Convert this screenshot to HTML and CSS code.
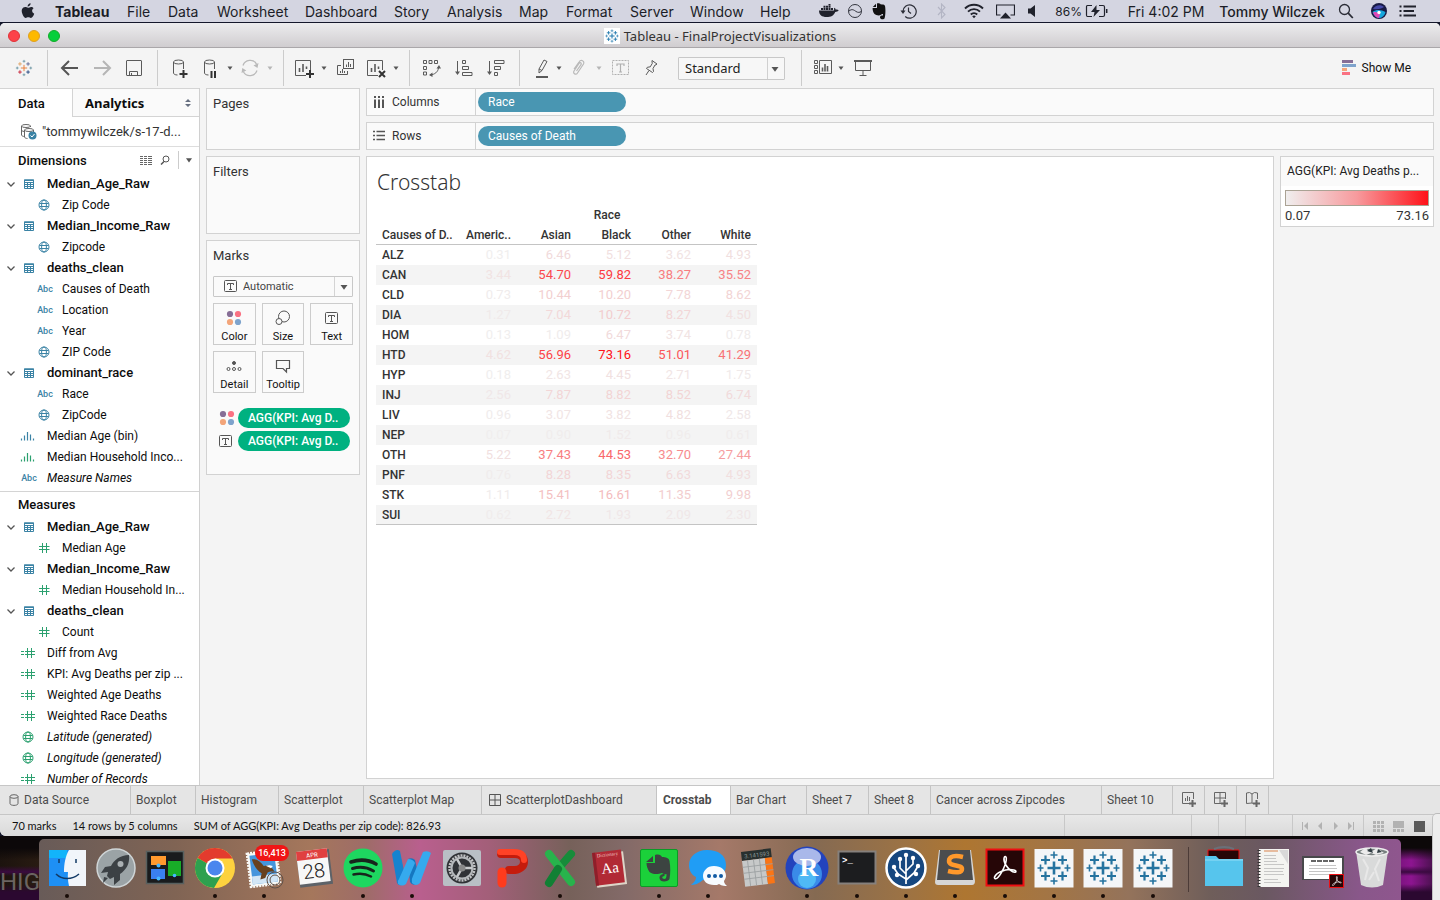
FILE: index.html
```html
<!DOCTYPE html>
<html lang="en">
<head>
<meta charset="utf-8">
<title>Tableau - FinalProjectVisualizations</title>
<link rel="stylesheet" href="styles.css">
</head>
<body>
<svg class="defs" aria-hidden="true">
  <symbol id="spark" viewBox="0 0 40 40"><path d="M20 13.500v13M13.500 20h13" stroke-width="2.600"/><path d="M11.500 7.500v9M7 12h9M28.500 7.500v9M24 12h9M11.500 23.500v9M7 28h9M28.500 23.500v9M24 28h9" stroke-width="2.200"/><path d="M20 3.500v7M16.500 7h7M20 29.500v7M16.500 33h7M6.500 16.500v7M3.500 20h6M33.500 16.500v7M30.500 20h6" stroke-width="1.600"/></symbol>
  <symbol id="caret" viewBox="0 0 10 10"><path d="M2.500 3.500h5L5 7z" fill="currentColor"/></symbol>
  <symbol id="chev" viewBox="0 0 10 10"><path d="M1.500 3.500 5 7l3.500-3.500" fill="none" stroke="#555" stroke-width="1.300"/></symbol>
  <symbol id="table" viewBox="0 0 12 12"><path d="M1.500 2h9v8.500h-9zM1.500 4.500h9M1.500 6.500h9M1.500 8.500h9M4.500 4v6.500M7.500 4v6.500" fill="none" stroke="currentColor"/><path d="M1 1.500h10v1.500H1z" fill="currentColor"/></symbol>
  <symbol id="globe" viewBox="0 0 12 12"><g fill="none" stroke="currentColor"><circle cx="6" cy="6" r="5"/><ellipse cx="6" cy="6" rx="2.400" ry="5"/><path d="M1.500 4.500h9M1.500 7.500h9"/></g></symbol>
  <symbol id="hash" viewBox="0 0 12 12"><path d="M4.500 1v10M8.500 1v10M1 4.500h10.500M1 7.500h10.500" fill="none" stroke="currentColor"/></symbol>
  <symbol id="chash" viewBox="0 0 16 12"><path d="M7.500 1v10M11.500 1v10M5 4.500h10M5 7.500h10M1 4.500h3M1 7.500h3" fill="none" stroke="currentColor"/></symbol>
  <symbol id="bins" viewBox="0 0 16 12"><path d="M1.500 8.500v2M4.500 5.500v5M7.500 2v8.500M10.500 4.500v6M13.500 8.500v2" fill="none" stroke="currentColor" stroke-width="1.200"/></symbol>
  <symbol id="tbox" viewBox="0 0 14 14"><rect x=".5" y="1.500" width="12" height="11" rx="1" fill="none" stroke="#555"/><path d="M3.500 6V4.500h6V6M6.500 4.500v5.500M5 10.500h3" fill="none" stroke="#555"/></symbol>
  <symbol id="dots4" viewBox="0 0 16 16"><circle cx="4" cy="4" r="3.100" fill="#876e96"/><circle cx="12" cy="4" r="3.100" fill="#fa7283"/><circle cx="4" cy="12" r="3.100" fill="#f3a57a"/><circle cx="12" cy="12" r="3.100" fill="#7ea3cc"/></symbol>
  <symbol id="acro" viewBox="0 0 20 20"><path d="M2.500 16.500c1-3 7-5.500 12-5 4 .5 3 2.500.5 1.500C11 11 8.500 6 9 3.500c.5-2 2-1 1.500 1.500C10 9 6 16.500 4 17.500c-1 .5-2 0-1.500-1z" fill="none" stroke="#fff" stroke-width="1.100"/></symbol>
</svg>

<header class="menubar">
  <nav class="menus" aria-label="Menu bar">
    <button class="menu apple" aria-label="Apple"><svg width="14" height="16" viewBox="0 0 14 16" fill="#20222c"><path d="M9.600.3c.1 1.700-1.400 3.300-3 3.200C6.500 1.900 8 .5 9.600.3zM12.600 5.300c-2.200 1.400-1.900 4.300.6 5.400-.6 1.800-1.900 4.200-3.300 4.200-1 0-1.400-.6-2.600-.6s-1.700.6-2.600.6C2.700 15-.2 8.900 1 6.200c.7-1.500 1.900-2.200 3.200-2.200 1.100 0 1.900.7 2.900.7.900 0 1.700-.8 3.100-.8.9 0 1.900.5 2.400 1.400z"/></svg></button>
    <button class="menu app">Tableau</button><button class="menu">File</button><button class="menu">Data</button><button class="menu">Worksheet</button><button class="menu">Dashboard</button><button class="menu">Story</button><button class="menu">Analysis</button><button class="menu">Map</button><button class="menu">Format</button><button class="menu">Server</button><button class="menu">Window</button><button class="menu">Help</button>
  </nav>
  <div class="tray">
    <svg width="20" height="14" viewBox="0 0 20 14" fill="#20222c"><path d="M0 6.500h15c.3-1.200-.2-2 .4-2.800 1 .5 1.300 1.200 1.300 2 1.200-.2 2.300 0 3 .5-.7 1.300-2 1.700-3.500 1.700C14.800 11.500 12 13 7.500 13 3 13 0 11 0 6.500z"/><path d="M2 4h2v2H2zM4.500 4h2v2h-2zM7 4h2v2H7zM9.500 4h2v2h-2zM12 4h2v2h-2zM4.500 1.700h2v2h-2zM7 1.700h2v2H7zM9.500 1.700h2v2h-2zM9.500-.4h2v1.800h-2z"/></svg>
    <svg width="16" height="16" viewBox="0 0 16 16" fill="none" stroke="#33353f"><circle cx="8" cy="8" r="6.500"/><path d="M2 8c3-2.500 5-1 7 .5 2 1.300 4 1 5 0"/></svg>
    <svg width="14" height="17" viewBox="0 0 14 17" fill="#111"><path d="M4 .8 4 4H.8zM5 .5c1.500-.4 3 .1 3.500.8 2 .2 4 .2 4.500 1.700.8 4 .5 10-.5 12.500-.8 1.200-4.500 1-4.500-1 0-1.800 1-2 3-2v-1.500c-1-.2-1.500 0-2 .8-1.500 1-5 .7-6.500-.8C1.200 9.500.5 7 .6 5H5z"/></svg>
    <svg width="17" height="17" viewBox="0 0 17 17" fill="none" stroke="#2a2c36" stroke-width="1.200"><path d="M3 8.500a6.600 6.600 0 1 1 2.200 5M8.500 4.500v4l2.500 2"/><path d="M.5 7.500h5L3 11z" fill="#2a2c36" stroke="none"/></svg>
    <svg width="10" height="16" viewBox="0 0 10 16" fill="none" stroke="#b3b5c4" stroke-width="1.100"><path d="m1 4 7 7.500-3.500 3.500V1L8 4.500 1 12"/></svg>
    <svg width="20" height="16" viewBox="0 0 20 16" fill="none" stroke="#20222c" stroke-width="1.900"><path d="M1 5.500c5-5 13-5 18 0M4 8.700c3.400-3.400 8.600-3.400 12 0M6.800 11.500c1.800-1.800 4.600-1.800 6.400 0"/><path d="m8.200 13.300 1.800 2 1.800-2c-1-1-2.600-1-3.600 0z" fill="#20222c" stroke="none"/></svg>
    <svg width="19" height="15" viewBox="0 0 19 15"><path d="M4.500 11h-4V1h18v10h-4" fill="none" stroke="#20222c" stroke-width="1.200"/><path d="M4 14.500h11l-5.500-6z" fill="#20222c"/></svg>
    <svg width="10" height="14" viewBox="0 0 10 14" fill="#20222c"><path d="M1 4.500h2.500L8 1v12L3.500 9.500H1z"/></svg>
    <span class="pct">86%</span>
    <svg width="24" height="14" viewBox="0 0 24 14" fill="none" stroke="#20222c" stroke-width="1.200"><path d="M7 1.500H2.500Q1.500 1.500 1.500 3v8q0 1.500 1 1.500H7M14 1.500h4q1.500 0 1.500 1.500v8q0 1.500-1.500 1.500h-4"/><path d="M11.500 1 6 8h3.500L8.500 13 15 6h-3.500z" fill="#20222c" stroke="none"/><path d="M21.700 5v4" stroke-width="1.500"/></svg>
    <span class="clock">Fri 4:02 PM</span><span class="user">Tommy Wilczek</span>
    <svg width="16" height="16" viewBox="0 0 16 16" fill="none" stroke="#2a2c36" stroke-width="1.300"><circle cx="6.500" cy="6.500" r="5"/><path d="m10.200 10.200 4.600 4.800" stroke-width="1.800"/></svg>
    <svg width="16" height="16" viewBox="0 0 16 16"><circle cx="8" cy="8" r="8" fill="#181a45"/><path d="M2 6c2-4 8-5 11-2-2 1-5 3-11 2z" fill="#4448a8"/><path d="M1.500 9c4-3 9-2 13 0-1 4-4 6-6.500 6S2.500 12 1.500 9z" fill="#16a7dc"/><path d="M2 9.500c3-1 5 0 7 2l-1 3.400C5 15 3 12.500 2 9.500z" fill="#e047b6"/><circle cx="8" cy="9.500" r="1.700" fill="#fff"/></svg>
    <svg width="18" height="14" viewBox="0 0 18 14" stroke="#20222c" stroke-width="1.800"><path d="M4.500 2.500H17M4.500 7H15M4.500 11.500H17M.5 2.500h2M.5 7h2M.5 11.500h2"/></svg>
  </div>
</header>

<div class="window">
  <div class="titlebar">
    <div class="lights"><button class="light red" aria-label="Close"></button><button class="light amber" aria-label="Minimize"></button><button class="light green" aria-label="Zoom"></button></div>
    <h1 class="title"><svg class="docicon" width="16" height="16" stroke="#1f78ad"><use href="#spark"/></svg>Tableau - FinalProjectVisualizations</h1>
  </div>

  <div class="toolbar">
    <div class="group g-logo"><button class="tool" aria-label="Start page"><svg width="18" height="18" viewBox="0 0 20 20" fill="none" stroke-width="1"><path d="M10 6.500v7M6.500 10h7" stroke="#e8762d"/><path d="M5.500 3.500v4M3.500 5.500h4" stroke="#e0a060"/><path d="M14.500 3.500v4M12.500 5.500h4" stroke="#5c6692"/><path d="M5.500 12.500v4M3.500 14.500h4" stroke="#c72037"/><path d="M14.500 12.500v4M12.500 14.500h4" stroke="#1f447e"/><path d="M10 1v3M8.500 2.500h3M10 16v3M8.500 17.500h3M2.500 8.500v3M1 10h3M17.500 8.500v3M16 10h3" stroke="#7099a6"/></svg></button></div>
    <div class="group g-nav">
      <button class="tool" aria-label="Undo"><svg width="24" height="24" fill="none" stroke="#555" stroke-width="2"><path d="M20 12H5M11 5l-7 7 7 7"/></svg></button>
      <button class="tool" aria-label="Redo"><svg width="24" height="24" fill="none" stroke="#b5b5b5" stroke-width="2"><path d="M4 12h15M13 5l7 7-7 7"/></svg></button>
      <button class="tool" aria-label="Save"><svg width="24" height="24" fill="none" stroke="#5a5a5a"><rect x="4.500" y="4.500" width="15" height="15" rx=".5"/><path d="M7.500 19v-3.500h8V19M9.500 19v-2"/></svg></button>
    </div>
    <div class="group g-data">
      <button class="tool n30" aria-label="New data source"><svg width="24" height="24" fill="none" stroke="#5a5a5a"><ellipse cx="10.500" cy="6" rx="5" ry="2"/><path d="M5.500 6v11c0 1 1.500 2 4 2M15.500 6v7"/><path d="M15.500 14v8M11.500 18h8" stroke="#333" stroke-width="2"/></svg></button>
      <button class="tool n30" aria-label="Pause auto updates"><svg width="24" height="24" fill="none" stroke="#5a5a5a"><ellipse cx="11.500" cy="6" rx="5" ry="2"/><path d="M6.500 6v11c0 1 1.500 2 4 2M16.500 6v7"/><path d="M13.500 15v7M17 15v7" stroke="#333" stroke-width="2"/></svg></button>
      <button class="tool drop" aria-label="Update options"><svg width="10" height="10"><use href="#caret"/></svg></button>
      <button class="tool n30" aria-label="Refresh"><svg width="24" height="24" fill="none" stroke="#b9b9b9" stroke-width="1.300"><path d="M5 9.500a7.500 7.500 0 0 1 13.500-1.500M19 14.500A7.500 7.500 0 0 1 5.500 16"/><path d="m20.500 7-1 5-4-2.500zM3.500 17l.8-5 4 2.500z" fill="#b9b9b9" stroke="none"/></svg></button>
      <button class="tool drop off" aria-label="Refresh options"><svg width="10" height="10"><use href="#caret"/></svg></button>
    </div>
    <div class="group g-sheet">
      <button class="tool n30" aria-label="New worksheet"><svg width="24" height="24" fill="none" stroke="#5a5a5a"><path d="M14 19.500H3.500v-15h15V14"/><path d="M7.500 16v-4M11 16V8M14.500 13v-2.500" stroke-width="1.600"/><path d="M18 14v8M14 18h8" stroke="#333" stroke-width="2"/></svg></button>
      <button class="tool drop" aria-label="New sheet options"><svg width="10" height="10"><use href="#caret"/></svg></button>
      <button class="tool" aria-label="Duplicate"><svg width="24" height="24" fill="none" stroke="#5a5a5a"><rect x="10.500" y="3.500" width="10" height="9"/><path d="M8 9.500H4.500v9h10V15M13.500 11V8.500M15.500 11V6M17.500 11V8M7.500 17v-2M9.500 17v-4M11.500 17v-2"/></svg></button>
      <button class="tool n30" aria-label="Clear sheet"><svg width="24" height="24" fill="none" stroke="#5a5a5a"><path d="M14 19.500H3.500v-15h15V14"/><path d="M7.500 16v-4M11 16V8M14.500 13v-2.500" stroke-width="1.600"/><path d="m15 15 6 6M21 15l-6 6" stroke="#333" stroke-width="2"/></svg></button>
      <button class="tool drop" aria-label="Clear options"><svg width="10" height="10"><use href="#caret"/></svg></button>
    </div>
    <div class="group g-sort">
      <button class="tool" aria-label="Swap rows and columns"><svg width="24" height="24" fill="none" stroke="#5a5a5a"><path d="M3.500 4.500h3v3h-3zM9 4.500h3v3H9zM14.500 4.500h3v3h-3zM3.500 10.500h3v3h-3zM3.500 16h3v3h-3zM18.500 12c-.5 4-4 6.500-8 7"/><path d="m19 9 2 3.500h-4.500zM9 19l3.500-2.500V21z" fill="#5a5a5a" stroke="none"/></svg></button>
      <button class="tool" aria-label="Sort ascending"><svg width="24" height="24" fill="none" stroke="#5a5a5a"><path d="M5.500 5v12M10.500 4.500h3v3h-3zM10.500 10.500h6v3h-6zM10.500 16.500h9.500v3h-9.500z"/><path d="M3 15.500h5L5.500 19z" fill="#5a5a5a" stroke="none"/></svg></button>
      <button class="tool" aria-label="Sort descending"><svg width="24" height="24" fill="none" stroke="#5a5a5a"><path d="M5.500 5v12M10.500 4.500h9.500v3h-9.500zM10.500 10.500h6v3h-6zM10.500 16.500h3v3h-3z"/><path d="M3 15.500h5L5.500 19z" fill="#5a5a5a" stroke="none"/></svg></button>
    </div>
    <div class="group g-format">
      <button class="tool n24" aria-label="Highlight"><svg width="24" height="24" fill="none" stroke="#5a5a5a"><path d="m9 13 5-9 3 1.500-5 9-3 2.500zM9 13l3 1.500"/><path d="M6 21h12" stroke-width="2"/></svg></button>
      <button class="tool drop" aria-label="Highlight options"><svg width="10" height="10"><use href="#caret"/></svg></button>
      <button class="tool n30" aria-label="Group members"><svg width="24" height="24" fill="none" stroke="#b9b9b9" stroke-width="1.200"><path d="m7 13 5-7c2-3 6-1 4.500 2l-6 9c-1.500 2.500-5 .5-3.500-2l5-7.500c1-1.500 3-.5 2 1.200L9.500 15"/></svg></button>
      <button class="tool drop off" aria-label="Group options"><svg width="10" height="10"><use href="#caret"/></svg></button>
      <button class="tool" aria-label="Show mark labels"><svg width="24" height="24" fill="none" stroke="#b0b0b0"><rect x="4.500" y="4.500" width="16" height="14" stroke-dasharray="2 1"/><path d="M9 10V8h7v2M12.500 8v8M11 16h3" stroke-width="1.200"/></svg></button>
      <button class="tool n30" aria-label="Fix axes"><svg width="24" height="24" fill="none" stroke="#5a5a5a"><path d="m13 4.500 5 3.500-1 .8-1 .2-2 3.500.5 3-1 1-6-4 .8-1.200 3-.5 2-3.500-.3-1.500zM10 14.500 7 19"/></svg></button>
      <label class="fit"><select aria-label="Fit"><option>Standard</option></select><svg width="14" height="14"><use href="#caret"/></svg></label>
    </div>
    <div class="group g-show">
      <button class="tool n24" aria-label="Show cards"><svg width="24" height="24" fill="none" stroke="#5a5a5a"><path d="M2.500 4.500h3v3h-3zM2.500 9.500h3v3h-3zM2.500 14.500h3v3h-3zM7.500 4.500h12v13h-12z"/><path d="M10.500 15.500v-4M13 15.500V8M15.500 15.500V10" stroke-width="1.600"/></svg></button>
      <button class="tool drop" aria-label="Card options"><svg width="10" height="10"><use href="#caret"/></svg></button>
      <button class="tool" aria-label="Presentation mode"><svg width="24" height="24" fill="none" stroke="#5a5a5a"><path d="M4 5h18" stroke-width="2"/><path d="M5.500 6v8.500h15V6M13 14.500v5M9.500 19.500h7"/></svg></button>
    </div>
    <button class="showme"><svg width="14" height="16"><path fill="#876e96" d="M0 0h11v3H0z"/><path fill="#7ea3cc" d="M0 4h14v3H0z"/><path fill="#f3a57a" d="M0 8h5v3H0z"/><path fill="#fa7283" d="M0 12h8v3H0z"/></svg>Show Me</button>
  </div>

  <div class="workspace">
    <aside class="datapane">
      <div class="panetabs"><button class="ptab on">Data</button><button class="ptab">Analytics<svg width="8" height="10" fill="#666f80"><path d="M1 4h6L4 1zM1 6h6L4 9z"/></svg></button></div>
      <div class="source"><svg width="18" height="18" fill="none" stroke="#666"><ellipse cx="6" cy="3" rx="4.500" ry="1.500"/><path d="M1.500 3v9c0 1 2 1.500 3 1.500M10.500 3v1M1.500 7.500c1 .8 2 1 3 1"/><ellipse cx="9" cy="7" rx="4.500" ry="1.500"/><path d="M4.500 7v7c0 1 2 1.500 3 1.500M13.500 7v2"/><circle cx="12.500" cy="12.500" r="4" fill="#3b83a5" stroke="none"/><path d="m10.500 12.500 1.500 1.500 2.500-3" stroke="#fff"/></svg><span>"tommywilczek/s-17-d...</span></div>
      <div class="phead"><h2>Dimensions</h2><div class="ptools"><button aria-label="View as list"><svg width="12" height="10" stroke="#666"><path d="M0 1.500h3M4 1.500h3M8 1.500h4M0 3.500h3M4 3.500h3M8 3.500h4M0 5.500h3M4 5.500h3M8 5.500h4M0 7.500h3M4 7.500h3M8 7.500h4M0 9.500h3M4 9.500h3M8 9.500h4"/></svg></button><button aria-label="Find"><svg width="10" height="10" fill="none" stroke="#555"><circle cx="6" cy="4" r="3"/><path d="M4 6.500 1 9.500" stroke-width="1.500"/></svg></button><button class="more" aria-label="More"><svg width="12" height="12"><use href="#caret"/></svg></button></div></div>
      <ul class="fields">
        <li class="folder"><svg class="cv"><use href="#chev"/></svg><svg class="ic"><use href="#table"/></svg><span>Median_Age_Raw</span></li>
        <li class="child"><svg class="ic"><use href="#globe"/></svg><span>Zip Code</span></li>
        <li class="folder"><svg class="cv"><use href="#chev"/></svg><svg class="ic"><use href="#table"/></svg><span>Median_Income_Raw</span></li>
        <li class="child"><svg class="ic"><use href="#globe"/></svg><span>Zipcode</span></li>
        <li class="folder"><svg class="cv"><use href="#chev"/></svg><svg class="ic"><use href="#table"/></svg><span>deaths_clean</span></li>
        <li class="child"><i>Abc</i><span>Causes of Death</span></li>
        <li class="child"><i>Abc</i><span>Location</span></li>
        <li class="child"><i>Abc</i><span>Year</span></li>
        <li class="child"><svg class="ic"><use href="#globe"/></svg><span>ZIP Code</span></li>
        <li class="folder"><svg class="cv"><use href="#chev"/></svg><svg class="ic"><use href="#table"/></svg><span>dominant_race</span></li>
        <li class="child"><i>Abc</i><span>Race</span></li>
        <li class="child"><svg class="ic"><use href="#globe"/></svg><span>ZipCode</span></li>
        <li class="leaf"><svg class="ic wide"><use href="#bins"/></svg><span>Median Age (bin)</span></li>
        <li class="leaf grn"><svg class="ic wide"><use href="#bins"/></svg><span>Median Household Inco...</span></li>
        <li class="leaf gen"><i>Abc</i><span>Measure Names</span></li>
      </ul>
      <div class="phead measures"><h2>Measures</h2></div>
      <ul class="fields grow">
        <li class="folder"><svg class="cv"><use href="#chev"/></svg><svg class="ic"><use href="#table"/></svg><span>Median_Age_Raw</span></li>
        <li class="child grn"><svg class="ic"><use href="#hash"/></svg><span>Median Age</span></li>
        <li class="folder"><svg class="cv"><use href="#chev"/></svg><svg class="ic"><use href="#table"/></svg><span>Median_Income_Raw</span></li>
        <li class="child grn"><svg class="ic"><use href="#hash"/></svg><span>Median Household In...</span></li>
        <li class="folder"><svg class="cv"><use href="#chev"/></svg><svg class="ic"><use href="#table"/></svg><span>deaths_clean</span></li>
        <li class="child grn"><svg class="ic"><use href="#hash"/></svg><span>Count</span></li>
        <li class="leaf grn"><svg class="ic wide"><use href="#chash"/></svg><span>Diff from Avg</span></li>
        <li class="leaf grn"><svg class="ic wide"><use href="#chash"/></svg><span>KPI: Avg Deaths per zip ...</span></li>
        <li class="leaf grn"><svg class="ic wide"><use href="#chash"/></svg><span>Weighted Age Deaths</span></li>
        <li class="leaf grn"><svg class="ic wide"><use href="#chash"/></svg><span>Weighted Race Deaths</span></li>
        <li class="leaf grn gen"><svg class="ic wide"><use href="#globe"/></svg><span>Latitude (generated)</span></li>
        <li class="leaf grn gen"><svg class="ic wide"><use href="#globe"/></svg><span>Longitude (generated)</span></li>
        <li class="leaf grn gen"><svg class="ic wide"><use href="#chash"/></svg><span>Number of Records</span></li>
      </ul>
    </aside>

    <div class="cards">
      <section class="card pages"><h2>Pages</h2></section>
      <section class="card filters"><h2>Filters</h2></section>
      <section class="card marks">
        <h2>Marks</h2>
        <label class="marktype"><svg class="tb" width="14" height="14"><use href="#tbox"/></svg><select aria-label="Mark type"><option>Automatic</option></select><svg class="cr" width="14" height="14"><use href="#caret"/></svg></label>
        <div class="markgrid">
          <button><svg width="16" height="16"><use href="#dots4"/></svg>Color</button>
          <button><svg width="16" height="16" fill="none" stroke="#555"><circle cx="9" cy="6.500" r="5.500"/><circle cx="4" cy="11.500" r="3" fill="#fafafa"/></svg>Size</button>
          <button><svg width="14" height="16" viewBox="0 0 14 14"><use href="#tbox"/></svg>Text</button>
          <button><svg width="16" height="16" fill="none" stroke="#555"><circle cx="8" cy="5" r="1.500" fill="#555"/><circle cx="2.500" cy="11" r="1.500"/><circle cx="8" cy="11" r="1.500"/><circle cx="13.500" cy="11" r="1.500"/></svg>Detail</button>
          <button><svg width="16" height="16" fill="none" stroke="#555" stroke-width="1.200"><path d="M1.500 2.500h13v8h-3v3.500l-3.500-3.500H1.500z"/></svg>Tooltip</button>
        </div>
        <div class="pillrow"><svg width="16" height="16"><use href="#dots4"/></svg><button class="pill green">AGG(KPI: Avg D..</button></div>
        <div class="pillrow"><svg width="14" height="14"><use href="#tbox"/></svg><button class="pill green">AGG(KPI: Avg D..</button></div>
      </section>
    </div>

    <main class="main">
      <div class="shelf"><div class="slabel"><svg width="12" height="12" stroke="#555" stroke-width="2"><path d="M2 0v2M6 0v2M10 0v2M2 3.500V12M6 3.500V12M10 3.500V12"/></svg>Columns</div><button class="pill blue">Race</button></div>
      <div class="shelf"><div class="slabel"><svg width="12" height="12" stroke="#555" stroke-width="1.400"><path d="M0 1.500h2M3.500 1.500H12M0 5.500h2M3.500 5.500H12M0 9.500h2M3.500 9.500H12"/></svg>Rows</div><button class="pill blue">Causes of Death</button></div>
      <div class="viewrow">
        <section class="view">
          <h2>Crosstab</h2>
          <table class="xtab">
            <thead>
              <tr><th></th><th class="field" colspan="5">Race</th></tr>
              <tr class="cols"><th>Causes of D..</th><th>Americ..</th><th>Asian</th><th>Black</th><th>Other</th><th>White</th></tr>
            </thead>
            <tbody>
              <tr><th>ALZ</th><td style="--t:0%">0.31</td><td style="--t:9%">6.46</td><td style="--t:7%">5.12</td><td style="--t:5%">3.62</td><td style="--t:7%">4.93</td></tr>
              <tr><th>CAN</th><td style="--t:5%">3.44</td><td style="--t:75%">54.70</td><td style="--t:82%">59.82</td><td style="--t:52%">38.27</td><td style="--t:49%">35.52</td></tr>
              <tr><th>CLD</th><td style="--t:1%">0.73</td><td style="--t:14%">10.44</td><td style="--t:14%">10.20</td><td style="--t:11%">7.78</td><td style="--t:12%">8.62</td></tr>
              <tr><th>DIA</th><td style="--t:2%">1.27</td><td style="--t:10%">7.04</td><td style="--t:15%">10.72</td><td style="--t:11%">8.27</td><td style="--t:6%">4.50</td></tr>
              <tr><th>HOM</th><td style="--t:0%">0.13</td><td style="--t:1%">1.09</td><td style="--t:9%">6.47</td><td style="--t:5%">3.74</td><td style="--t:1%">0.78</td></tr>
              <tr><th>HTD</th><td style="--t:6%">4.62</td><td style="--t:78%">56.96</td><td style="--t:100%">73.16</td><td style="--t:70%">51.01</td><td style="--t:56%">41.29</td></tr>
              <tr><th>HYP</th><td style="--t:0%">0.18</td><td style="--t:4%">2.63</td><td style="--t:6%">4.45</td><td style="--t:4%">2.71</td><td style="--t:2%">1.75</td></tr>
              <tr><th>INJ</th><td style="--t:3%">2.56</td><td style="--t:11%">7.87</td><td style="--t:12%">8.82</td><td style="--t:12%">8.52</td><td style="--t:9%">6.74</td></tr>
              <tr><th>LIV</th><td style="--t:1%">0.96</td><td style="--t:4%">3.07</td><td style="--t:5%">3.82</td><td style="--t:7%">4.82</td><td style="--t:3%">2.58</td></tr>
              <tr><th>NEP</th><td style="--t:0%">0.07</td><td style="--t:1%">0.90</td><td style="--t:2%">1.52</td><td style="--t:1%">0.96</td><td style="--t:1%">0.61</td></tr>
              <tr><th>OTH</th><td style="--t:7%">5.22</td><td style="--t:51%">37.43</td><td style="--t:61%">44.53</td><td style="--t:45%">32.70</td><td style="--t:37%">27.44</td></tr>
              <tr><th>PNF</th><td style="--t:1%">0.76</td><td style="--t:11%">8.28</td><td style="--t:11%">8.35</td><td style="--t:9%">6.63</td><td style="--t:7%">4.93</td></tr>
              <tr><th>STK</th><td style="--t:1%">1.11</td><td style="--t:21%">15.41</td><td style="--t:23%">16.61</td><td style="--t:15%">11.35</td><td style="--t:14%">9.98</td></tr>
              <tr><th>SUI</th><td style="--t:1%">0.62</td><td style="--t:4%">2.72</td><td style="--t:3%">1.93</td><td style="--t:3%">2.09</td><td style="--t:3%">2.30</td></tr>
            </tbody>
          </table>
        </section>
        <aside class="legend"><h2>AGG(KPI: Avg Deaths p...</h2><div class="ramp"></div><div class="ends"><span>0.07</span><span>73.16</span></div></aside>
      </div>
    </main>
  </div>

  <div class="sheets">
    <button><svg width="10" height="12" fill="none" stroke="#666"><ellipse cx="5" cy="2.500" rx="4" ry="1.800"/><path d="M1 2.500v7C1 12 9 12 9 9.500v-7"/></svg>Data Source</button><button>Boxplot</button><button>Histogram</button><button>Scatterplot</button><button>Scatterplot Map</button>
    <button><svg width="12" height="12" fill="none" stroke="#555"><path d="M.5.500h11v11H.5zM6 .5v11M.5 6h11"/></svg>ScatterplotDashboard</button><button class="on">Crosstab</button><button>Bar Chart</button><button>Sheet 7</button><button>Sheet 8</button><button>Cancer across Zipcodes</button><button>Sheet 10</button>
    <button class="add" aria-label="New worksheet"><svg width="16" height="16" fill="none" stroke="#666"><path d="M8 11.500H1.500v-11h11V7M4.500 9V6M6.500 9V4M8.500 9V5"/><path d="M11.500 8v7M8 11.500h7" stroke-width="2"/></svg></button><button class="add" aria-label="New dashboard"><svg width="16" height="16" fill="none" stroke="#666"><path d="M8 11.500H1.500v-11h11V7M7 .5v11M1.500 6h11"/><path d="M11.500 8v7M8 11.500h7" stroke-width="2"/></svg></button><button class="add" aria-label="New story"><svg width="16" height="16" fill="none" stroke="#666"><path d="M8 11.500 7 11l-5.500.5V1L4.500.5 7 2l2.500-1.500 3 .5v6M7 2v9"/><path d="M11.500 8v7M8 11.500h7" stroke-width="2"/></svg></button>
  </div>
  <footer class="status">
    <span>70 marks</span><span>14 rows by 5 columns</span><span>SUM of AGG(KPI: Avg Deaths per zip code): 826.93</span>
    <div class="slots"><div></div><div></div><div></div><div></div>
      <div class="pager"><button aria-label="First sheet"><svg width="8" height="8" fill="#b2b2b2"><path d="M1 0h1v8H1zM7 0v8L3 4z"/></svg></button><button aria-label="Previous sheet"><svg width="8" height="8" fill="#b2b2b2"><path d="M6 0v8L2 4z"/></svg></button><button aria-label="Next sheet"><svg width="8" height="8" fill="#b2b2b2"><path d="M2 0v8l4-4z"/></svg></button><button aria-label="Last sheet"><svg width="8" height="8" fill="#b2b2b2"><path d="M6 0h1v8H6zM1 0v8l4-4z"/></svg></button></div>
      <div class="views"><button aria-label="Sheet sorter"><svg width="12" height="12" fill="#b2b2b2"><path d="M0 1h3v3H0zM4 1h3v3H4zM8 1h3v3H8zM0 5h3v3H0zM4 5h3v3H4zM8 5h3v3H8zM0 9h3v3H0zM4 9h3v3H4zM8 9h3v3H8z"/></svg></button><button aria-label="Filmstrip"><svg width="12" height="12" fill="#b2b2b2"><path d="M0 1h11v7H0zM0 9h3v3H0zM4 9h3v3H4zM8 9h3v3H8z"/></svg></button><button aria-label="Tabs"><svg width="12" height="12" fill="#5a5a5a"><path d="M0 1h11v11H0z"/></svg></button></div>
    </div>
  </footer>
</div>

<div class="desktop">
  <span class="sign">HIGH</span>
  <nav class="dock" aria-label="Dock">
    <div class="apps">
      <button class="run" aria-label="Finder"><svg viewBox="0 0 44 44"><path fill="#1e90f5" d="M4 4h37v36H4z"/><path fill="#12b4fa" d="M4 4h18v8H4z"/><path fill="#f1f5fa" d="M24 4h17v36H24c-1-5-1.500-9-1-14h-4c0-8 1.500-16 5-22z"/><path d="M14 13v4M31 13v4M11 28c6 6 16 6 23 0" fill="none" stroke="#123a66" stroke-width="1.500"/></svg></button>
      <button aria-label="Launchpad"><svg viewBox="0 0 44 44"><circle cx="22" cy="22" r="19" fill="#9ba3a6" stroke="#cfd5d7" stroke-width="1.500"/><path d="M35 9c-9 0-15 5-18 11l-6 1-4 6 7-1-1 4 3 3 4-2v8l6-5v-6c6-4 10-10 9-19zM14 32l-5 5 1-6z" fill="#3c4145"/><circle cx="26.500" cy="18" r="3" fill="#aab0b3"/></svg></button>
      <button aria-label="Mission Control"><svg viewBox="0 0 44 44"><path fill="#191b1d" stroke="#58605f" stroke-width="1.500" d="M3.500 5.500h37v32h-37z"/><path fill="#ff9a2e" d="M8 10h15v9H8z"/><path fill="#3a80f0" d="M8 23h14v10H8z"/><path fill="#18ad28" d="M25 15h13v15H25z"/><circle cx="15.500" cy="19.500" r="2" fill="#45b8ff"/><circle cx="15.500" cy="32.500" r="2" fill="#45b8ff"/><circle cx="31.500" cy="29.500" r="1.800" fill="#45b8ff"/></svg></button>
      <button class="run" aria-label="Chrome"><svg viewBox="0 0 44 44"><circle cx="22" cy="22" r="20" fill="#fdd23f"/><path d="M22 22 4.700 12A20 20 0 0 1 39.500 12.500H22z" fill="#e33b2e"/><path d="M4.700 12A20 20 0 0 0 21 42l9-15.500-8-4.500z" fill="#2ea04f"/><circle cx="22" cy="22" r="9.500" fill="#fff"/><circle cx="22" cy="22" r="7.500" fill="#4a86ee"/></svg></button>
      <button class="run" aria-label="Mail"><svg viewBox="0 0 44 44"><g transform="rotate(-7 22 22)"><path fill="#f8f8f5" stroke="#f8f8f5" stroke-width="3" stroke-dasharray="2 1" d="M7 6h29v33H7z"/><path fill="#4595dc" d="M9 8h25v29H9z"/><path fill="#d3e6f5" d="M9 29h25v8H9z"/><path d="M11 12c5 0 8 3 11 8 4-1 8 1 10 7-3-1-5-1-7 0l-3 5-5 1 2-6C15 24 12 18 11 12z" fill="#68411e"/><path d="m24 20 5 3 2-2-3-1z" fill="#fff"/></g><circle cx="33" cy="34" r="8" fill="none" stroke="#5f5149"/><circle cx="33" cy="34" r="5" fill="none" stroke="#5f5149"/></svg><b class="badge">16,413</b></button>
      <button aria-label="Calendar"><svg viewBox="0 0 44 44"><g transform="rotate(-7 22 22)"><path d="M6 5h33v35H6z" fill="#5d6268"/><path d="M6 4h31v33H6z" fill="#f7f7f7"/><path d="M6 4h31v9H6z" fill="#e04040"/><text x="21.500" y="11" class="cmon">APR</text><text x="21.500" y="32" class="cday">28</text></g></svg></button>
      <button class="run" aria-label="Spotify"><svg viewBox="0 0 44 44"><circle cx="22" cy="22" r="19.500" fill="#1ed760"/><g fill="none" stroke="#17251c" stroke-linecap="round"><path d="M10 16c9-3 18-2 25 2" stroke-width="3.600"/><path d="M11.500 22.500c7-2 15-1 21 2.500" stroke-width="3"/><path d="M12.500 28.500c6-1.500 12-1 17.500 2" stroke-width="2.500"/></g></svg></button>
      <button class="run" aria-label="Word"><svg viewBox="0 0 44 44"><path d="M2 8q4-6 8-3l5 25-1 8q-5 3-7-1z" fill="#1683cf"/><path d="M18 13q4-2 7 1l4 18-2 6q-5 2-7-2z" fill="#1577c0"/><path d="M18 13q5 0 7 4L16 38q-4 3-8 0-1-3 1-5z" fill="#35aaee"/><path d="M33 6q5-2 8 1L30 37q-4 4-8 0-1-4 1-7z" fill="#35aaee"/></svg></button>
      <button aria-label="System Preferences"><svg viewBox="0 0 44 44"><rect x="3" y="4" width="38" height="36" rx="2" fill="#b9bfc5"/><circle cx="22" cy="22" r="15.500" fill="#303236"/><circle cx="22" cy="22" r="12.500" fill="none" stroke="#c2c3c5" stroke-width="2.500" stroke-dasharray="2 1"/><circle cx="22" cy="22" r="10.500" fill="none" stroke="#b4b7ba" stroke-width="2"/><path d="m22 22 10 0M22 22l-5 9M22 22l-5-9" stroke="#c7c9cb" stroke-width="2.500"/><circle cx="22" cy="22" r="3.500" fill="#888"/></svg></button>
      <button aria-label="PowerPoint"><svg viewBox="0 0 44 44" fill="none" stroke-linecap="round"><path d="M12 8h14c12 0 12 15 0 16h-6" stroke="#c51c0c" stroke-width="8"/><path d="M11 6h14c8 0 10 4 10 8" stroke="#ff4226" stroke-width="6"/><path d="M13 26v11" stroke="#ff3b1d" stroke-width="9"/></svg></button>
      <button class="run" aria-label="Excel"><svg viewBox="0 0 44 44" fill="none" stroke-linecap="round" stroke-width="8"><path d="M33 8 20 23" stroke="#168c3a"/><path d="m11 8 22 28" stroke="#28b34c"/><path d="m20 23-9 14" stroke="#118034"/></svg></button>
      <button aria-label="Dictionary"><svg viewBox="0 0 44 44"><g transform="rotate(-7 22 22)"><path d="M7 7h30v33H7z" fill="#ddd5c8"/><path d="M6 5h29v33H6z" fill="#b12a35"/><path d="M6 5h3v33H6z" fill="#8e1f2a"/><text x="21" y="10" class="dword">Dictionary</text><text x="22" y="27" class="dict">Aa</text></g></svg></button>
      <button class="run" aria-label="Evernote"><svg viewBox="0 0 44 44"><rect x="3.500" y="3.500" width="37" height="37" rx="1.500" fill="#1bd13a" stroke="#0b9a26"/><path d="M16 10v6h-7zM18 9c4-1 6 0 7 2 4 0 7 1 7.500 4 1 6 1 12 0 18-1 3-10 4-10-1 0-3 2-4 5-4v2c-3 0-3 3 0 3 2 0 2-3 2-5-3 1-3-1-5-1-4 2-10 1-12-1-2-3-3-6-3-9h8.500z" fill="#3c4441"/></svg></button>
      <button class="run" aria-label="Messages"><svg viewBox="0 0 44 44"><path d="M21 4C10 4 3 11 3 19c0 6 3 10 7 12 0 4-3 6-5 8 6 0 9-3 12-5 14 2 23-5 23-15S32 4 21 4z" fill="#209df5"/><path d="M28 20c-7 0-11 5-11 10s4 9 11 9c2 0 4 0 5-1 3 2 6 2 8 2-2-2-3-3-3-5 1-2 2-3 2-5 0-6-5-10-12-10z" fill="#f7fbff"/><circle cx="23" cy="30" r="2" fill="#105aa4"/><circle cx="29" cy="30" r="2" fill="#105aa4"/><circle cx="35" cy="30" r="2" fill="#105aa4"/></svg></button>
      <button aria-label="Calculator"><svg viewBox="0 0 44 44"><g transform="rotate(-7 22 22)"><path fill="#28302f" d="M7 4h30v9H7z"/><path fill="#c7c9c9" d="M7 13h23v26H7z"/><path fill="#fa7516" d="M30 13h7v26h-7z"/><path d="M12.500 13v26M18.500 13v26M24.500 13v26M7 19.500h30M7 25.500h30M7 31.500h30" stroke="#9a9fa0" stroke-width=".8"/><text x="35" y="11" class="calc">3.141593</text></g></svg></button>
      <button class="run" aria-label="RStudio"><svg viewBox="0 0 44 44"><circle cx="22" cy="22" r="21.500" fill="#2343bd"/><circle cx="22" cy="28" r="15" fill="#3a8be8"/><circle cx="22" cy="33" r="9" fill="#4fb9f5"/><ellipse cx="22" cy="11" rx="14" ry="9" fill="#a9b8ea"/><text x="24" y="30" class="rlogo">R</text></svg></button>
      <button class="run" aria-label="Terminal"><svg viewBox="0 0 44 44"><path d="M3.500 5.500h37v32h-37z" fill="#1c1d1f" stroke="#85807c" stroke-width="2"/><text x="7" y="17" class="term">&gt;_</text></svg></button>
      <button class="run" aria-label="SourceTree"><svg viewBox="0 0 44 44"><circle cx="22" cy="22" r="19.500" fill="#16477f" stroke="#fff" stroke-width="2.500"/><g fill="none" stroke="#fff" stroke-width="1.700"><path d="M22 38V10M22 28l-6-6v-9M22 33l-8-5-4-6M22 25l7-7v-6M22 34l8-7 4-7"/></g><g fill="#fff"><circle cx="22" cy="9" r="2.200"/><circle cx="16" cy="13" r="2.200"/><circle cx="29" cy="12" r="2.200"/><circle cx="10" cy="21" r="2.200"/><circle cx="34" cy="20" r="2.200"/><circle cx="13" cy="29" r="2.200"/><circle cx="32" cy="28" r="2.200"/></g></svg></button>
      <button class="run" aria-label="Sublime Text"><svg viewBox="0 0 44 44"><path d="M6 4h32l4 31q0 4-3 4H5q-3 0-3-3z" fill="#d6d6d6"/><path d="M7 4h30l3 30H4z" fill="#4b4c4e"/><path d="M30 11c-8-2-14-1-14 4 0 6 13 3 13 8 0 4-6 4-14 2" fill="none" stroke="#ff982b" stroke-width="4.500"/></svg></button>
      <button class="run" aria-label="Acrobat"><svg viewBox="0 0 44 44"><path d="M3.500 3.500h37v36h-37z" fill="#260607" stroke="#ee0e12" stroke-width="2"/><svg x="8" y="7" width="29" height="29"><use href="#acro"/></svg></svg></button>
      <button class="run tab" aria-label="Tableau"><svg viewBox="0 0 44 44"><path d="M2.500 3h39v38.500h-39z" fill="#f4f6f8"/><svg x="2" y="2" width="40" height="40" stroke="#25739f"><use href="#spark"/></svg></svg></button>
      <button class="run tab" aria-label="Tableau"><svg viewBox="0 0 44 44"><path d="M2.500 3h39v38.500h-39z" fill="#f4f6f8"/><svg x="2" y="2" width="40" height="40" stroke="#25739f"><use href="#spark"/></svg></svg></button>
      <button class="run tab" aria-label="Tableau"><svg viewBox="0 0 44 44"><path d="M2.500 3h39v38.500h-39z" fill="#f4f6f8"/><svg x="2" y="2" width="40" height="40" stroke="#25739f"><use href="#spark"/></svg></svg></button>
    </div>
    <div class="divider"></div>
    <div class="files">
      <button aria-label="Downloads"><svg viewBox="0 0 44 44"><path d="M6 4h31v16H6z" fill="#260607" stroke="#ee0e12"/><path d="M12 3q10-4 20 0" stroke="#6b6f78" stroke-width="2" fill="none"/><path d="M3 10h11l3 3h24v27H3z" fill="#56c5ed"/><path d="M3 14h38" stroke="#91def7"/></svg></button>
      <button aria-label="Document"><svg viewBox="0 0 44 44"><path d="M7 3h30v38H7z" fill="#f4f4f1"/><path d="M7 4v37" stroke="#333" stroke-width="3" stroke-dasharray="1 2"/><path d="M12 5h14" stroke="#d9834c"/><path d="M12 9.500h12M12 12.500h12M12 15.500h13M12 18.500h20M12 22.500h20M12 25.500h19M12 28.500h20M12 33.500h14M12 36.500h17" stroke="#bbb" stroke-width=".8"/><path d="m27 4 9 14V4z" fill="#d9d9d9"/></svg></button>
      <button aria-label="PDF window"><svg viewBox="0 0 44 44"><path d="M1 10h42v24H1z" fill="#48484b"/><path d="M3 12h38v21H3z" fill="#fff"/><path d="M10 15h24" stroke="#333" stroke-width="1.500" stroke-dasharray="5 1"/><path d="M8 19.500h27M8 22.500h28M8 25.500h26M8 28.500h20" stroke="#c5c5c5"/><path d="M28.500 28.500h14v13h-14z" fill="#260607" stroke="#ee0e12"/><svg x="30" y="29" width="12" height="12"><use href="#acro"/></svg></svg></button>
      <button aria-label="Trash"><svg viewBox="0 0 44 44"><path d="m6 5 5 34q11 5 22 0l5-34z" fill="#d9dada"/><ellipse cx="22" cy="6" rx="16" ry="4" fill="#788080" stroke="#eee" stroke-width="1.500"/><path d="m10 6 5-4 6 4 6-4 7 5-8 2-5-2-5 2z" fill="#ececec"/><path d="m17 5 4-3 2 5zM28 3l4 3-5 1z" fill="#303c42"/><path d="m13 13 5 9-3 12M30 13l-5 10 4 12M19 34l5-8" fill="none" stroke="#e8e8e8" stroke-width="2"/></svg></button>
    </div>
  </nav>
</div>
<div class="peek"></div>
</body>
</html>
```
FILE: styles.css
```css
* { box-sizing: border-box; }
body { margin: 0; min-height: 100vh; height: 100vh; display: flex; flex-direction: column; overflow: hidden; position: relative; background: #14172b; font-family: Roboto, "Liberation Sans", sans-serif; font-size: 13px; color: #222; }
button { border: 0; padding: 0; margin: 0; background: none; font: inherit; color: inherit; text-align: left; white-space: nowrap; }
h1, h2 { margin: 0; font-weight: 400; font-size: 13px; }
ul { margin: 0; padding: 0; list-style: none; }
svg { display: block; flex: none; }
.defs { position: absolute; width: 0; height: 0; }

.menubar { flex: none; display: flex; justify-content: space-between; height: 22px; background: #d4d5e1; font-family: Inter, sans-serif; font-size: 14px; color: #1b1d27; }
.menus { display: grid; grid-template-columns: 55px 72px 41px 49px 88px 89px 53px 72px 47px 64px 60px 70px 40px; align-items: center; }
.apple { display: flex; justify-content: center; }
.app { font-weight: 700; }
.tray { display: grid; grid-template-columns: 24px 28px 20px 38px 30px 34px 28px 26px 37px 30px 108px 104px 44px 22px 36px; align-items: center; justify-items: center; padding-right: 14px; white-space: nowrap; }
.pct { font-size: 12px; justify-self: end; }
.user { font-weight: 500; }

.window { flex: 1; min-height: 0; margin-top: 1px; display: flex; flex-direction: column; background: #f4f4f4; border-radius: 5px 5px 6px 6px; overflow: hidden; }
.titlebar { flex: none; display: grid; grid-template-columns: 1fr auto 1fr; align-items: center; height: 25px; padding: 2px 8px 0; background: linear-gradient(#ececee, #d0cdd0); border-bottom: 1px solid #aaa7aa; }
.lights { display: flex; gap: 8px; }
.light { width: 12px; height: 12px; border-radius: 50%; }
.red { background: #fc4249; border: 1px solid #e03238; }
.amber { background: #fdb900; border: 1px solid #dfa023; }
.light.green { background: #06cf3b; border: 1px solid #12ac28; }
.title { display: flex; gap: 4px; align-items: center; font-family: "Noto Sans", sans-serif; font-size: 13px; line-height: 16px; color: #333; }
.docicon { background: #fff; }

.toolbar { flex: none; display: flex; align-items: center; height: 40px; color: #555; }
.group { display: flex; align-items: center; height: 36px; border-right: 1px solid #ccc; }
.tool { width: 32px; display: flex; justify-content: center; }
.n30 { width: 30px; }
.n24 { width: 24px; }
.drop { width: 10px; }
.off { color: #b5b5b5; }
.g-logo { padding: 0 7px 0 8px; }
.g-nav { padding: 0 7px 0 6px; }
.g-data { padding: 0 8px 0 7px; }
.g-sheet { padding: 0 8px 0 5px; }
.g-sort { padding: 0 7px 0 6px; }
.g-format { padding: 0 16px 0 10px; }
.g-show { padding-left: 10px; border: 0; }
.fit { margin-left: 12px; position: relative; }
.fit select { appearance: none; display: block; width: 107px; height: 23px; padding: 0 6px; border: 1px solid #c8c8c8; border-radius: 1px; background: linear-gradient(90deg, #f7f7f7 88px, #d0d0d0 88px, #d0d0d0 89px, #f7f7f7 89px); font-family: "Noto Sans", sans-serif; font-size: 13px; color: #222; }
.fit svg { position: absolute; right: 3px; top: 5px; }
.showme { margin-left: auto; margin-right: 29px; display: flex; gap: 6px; align-items: center; color: #111; font-size: 12px; }

.workspace { flex: 1; min-height: 0; display: flex; }
.datapane { flex: none; width: 200px; display: flex; flex-direction: column; overflow: hidden; background: #fff; border-right: 1px solid #d0d0d0; color: #0c0c0c; }
.panetabs { flex: none; display: flex; height: 29px; font-weight: 500; }
.ptab { flex: 1; padding: 0 7px 0 12px; display: flex; align-items: center; justify-content: space-between; background: #fafafa; border: 1px solid #d4d4d4; border-right: 0; font-family: "Noto Sans", sans-serif; font-weight: 700; }
.ptab.on { flex: none; width: 72px; padding-left: 18px; background: #fff; border: 0; border-top: 1px solid #d4d4d4; font-family: Roboto, sans-serif; font-weight: 500; }
.source { flex: none; display: flex; align-items: center; gap: 4px; height: 30px; padding-left: 20px; border-bottom: 1px solid #ddd; color: #333; }
.phead { flex: none; display: flex; align-items: center; justify-content: space-between; height: 26px; padding-left: 18px; }
.phead h2 { font-weight: 500; }
.ptools { display: flex; gap: 8px; align-items: center; color: #555; }
.ptools .more { border-left: 1px solid #ccc; padding: 3px 4px 3px 4px; }
.measures { margin-top: 3px; height: 25px; border-top: 1px solid #d4d4d4; }
.fields { flex: none; font-size: 12px; }
.grow { flex: 1 1 0; min-height: 0; overflow: hidden; }
.fields li { display: flex; align-items: center; height: 21px; white-space: nowrap; color: #0c0c0c; }
.fields svg, .fields i { color: #3b83a5; }
.fields .grn svg { color: #2ba06f; }
.fields i { width: 18px; margin-right: 8px; font-size: 9px; font-style: normal; font-weight: 500; text-align: center; }
.cv { width: 10px; height: 10px; margin-right: 7px; }
.ic { width: 12px; height: 12px; }
.wide { width: 16px; }
.fields .folder { padding-left: 6px; font-weight: 500; font-size: 13px; }
.folder .ic { margin-right: 12px; }
.child { padding-left: 36px; }
.child .ic { margin: 0 12px 0 2px; }
.leaf { padding-left: 20px; }
.leaf .ic { margin-right: 11px; }
.leaf i { margin-right: 9px; }
.gen span { font-style: italic; }

.cards { flex: none; width: 166px; display: flex; flex-direction: column; gap: 6px; padding: 0 6px; }
.card { background: #fafafa; border: 1px solid #d2d2d2; padding: 6px; }
.card h2 { line-height: 17px; color: #333; }
.pages { height: 62px; }
.filters { height: 78px; }
.marks { height: 235px; }
.marktype { position: relative; display: block; margin: 12px 0 6px; }
.marktype select { appearance: none; display: block; width: 100%; height: 21px; padding: 0 0 0 29px; border: 1px solid #c8c8c8; border-radius: 1px; background: linear-gradient(90deg, #fafafa 120px, #d4d4d4 120px, #d4d4d4 121px, #fafafa 121px); font-family: inherit; font-size: 11px; color: #444; }
.tb { position: absolute; left: 11px; top: 3px; }
.cr { position: absolute; right: 2px; top: 4px; color: #555; }
.markgrid { display: grid; grid-template-columns: repeat(3, 1fr); gap: 6px; margin-bottom: 15px; }
.markgrid button { display: flex; flex-direction: column; align-items: center; justify-content: space-between; height: 42px; padding: 6px 0 1px; background: #fafafa; border: 1px solid #ccc; font-size: 11px; line-height: 13px; color: #111; }
.pillrow { display: grid; grid-template-columns: 19px 1fr; align-items: center; padding: 0 3px 3px 6px; }
.pill { height: 20px; border-radius: 10px; padding: 0 10px; color: #fff; font-size: 12px; }
.pill.green { background: #00b180; font-weight: 500; }
.blue { background: #4996b2; width: 148px; margin-left: 2px; }

.main { flex: 1; min-width: 0; display: flex; flex-direction: column; gap: 6px; padding: 0 6px 6px 0; }
.shelf { flex: none; display: flex; align-items: center; height: 28px; background: #fafafa; border: 1px solid #d2d2d2; }
.slabel { width: 109px; align-self: stretch; display: flex; align-items: center; gap: 7px; padding-left: 6px; border-right: 1px solid #d2d2d2; color: #333; font-size: 12px; }
.viewrow { flex: 1; min-height: 0; display: flex; gap: 6px; align-items: flex-start; }
.view { flex: 1; align-self: stretch; background: #fff; border: 1px solid #d2d2d2; padding: 12px 9px; }
.view h2 { font-family: "Noto Sans", sans-serif; font-weight: 300; font-size: 21px; line-height: 26px; color: #333; margin: 0 1px 9px; }
.xtab { table-layout: fixed; width: 381px; border-collapse: collapse; font-size: 13px; line-height: 19px; border-bottom: 1px solid #c4c4c4; }
.xtab th, .xtab td { height: 20px; padding: 0 6px; text-align: right; white-space: nowrap; }
.xtab th { padding-top: 1px; line-height: 18px; font-weight: 500; color: #333; font-size: 12px; }
.xtab th:first-child { width: 81px; text-align: left; }
.xtab .field { text-align: center; }
.xtab thead th { padding-top: 2px; }
.xtab .cols { border-bottom: 1px solid #c4c4c4; }
.xtab .cols th:first-child { padding-right: 0; }
.xtab td { color: color-mix(in srgb, #ff1219 var(--t), #f0eeee); }
.xtab tbody tr:nth-child(even) { background: #f4f4f4; }
.legend { flex: none; width: 154px; background: #fff; border: 1px solid #d2d2d2; }
.legend h2 { height: 29px; padding-left: 6px; font-size: 12px; line-height: 29px; background: #fafafa; white-space: nowrap; }
.ramp { height: 16px; margin: 4px 4px 0; border: 1px solid #aaa294; background: linear-gradient(90deg, #f0eeee, #f79a9d 50%, #ff1219); }
.ends { display: flex; justify-content: space-between; padding: 2px 4px; line-height: 16px; color: #333; }

.sheets { flex: none; display: grid; grid-template-columns: 131px 65px 83px 85px 118px 175px 74px 76px 62px 62px 171px 71px 32px 32px 32px; height: 30px; background: #e5e5e5; border-top: 1px solid #c6c6c6; border-bottom: 1px solid #c6c6c6; font-size: 12px; color: #4c4c4c; }
.sheets button { display: flex; align-items: center; gap: 5px; padding-left: 5px; border-right: 1px solid #c4c4c4; }
.sheets button:first-child { padding-left: 9px; }
.sheets button:has(+ .on) { padding-left: 7px; }
.sheets .on { background: #fff; font-weight: 700; padding-left: 6px; }
.sheets .add { padding-left: 0; justify-content: center; }
.status { flex: none; display: flex; align-items: center; gap: 16px; height: 21px; padding-left: 12px; background: linear-gradient(#e8e8e8, #dadada); font-family: Lato, sans-serif; font-size: 11px; color: #111; white-space: nowrap; }
.slots { align-self: stretch; margin-left: auto; display: grid; grid-template-columns: 127px 27px 27px 47px 71px 77px; }
.slots > div { border-left: 1px solid #c8c8c8; }
.pager, .views { display: flex; align-items: center; justify-content: space-evenly; }
.views { padding-right: 6px; }

.desktop { flex: none; height: 64px; display: flex; align-items: flex-end; position: relative; padding: 3px 39px 0; background: linear-gradient(#0c0809 12px, transparent 24px, transparent 30px, #3a0a40 36px, transparent 40px, transparent 48px, #2b0830 56px), linear-gradient(90deg, #1c130e, #2a1c12 3%, #0c0908 50%, #120b0c 90%, #250d27 93%, #8d1590 98%, #36103b); overflow: hidden; }
.sign { position: absolute; left: 0; top: 34px; font-size: 24px; line-height: 24px; color: #6b6461; }
.dock { position: relative; flex: 1; height: 61px; display: flex; padding: 0 4px 0 3px; border-radius: 5px 5px 0 0; background: linear-gradient(90deg, #685b58, #806454 10%, #a5775c 20%, #9e6c68 24%, #b95f8e 28%, #a35f79 33%, #76615a 39%, #836a68 43%, #a57969 50%, #856a52 57%, #9a7246 63%, #ae7631 68%, #a37544 74%, #94735b 80%, #6f5e5a 86%, #6a5861 90%, #89578a 97%, #8f568e); }
.apps { flex: 23; display: grid; grid-template-columns: repeat(23, 1fr); }
.files { flex: 4; display: grid; grid-template-columns: repeat(4, 1fr); }
.divider { flex: none; width: 22px; margin: 8px 0; background: linear-gradient(#4c3b37, #4c3b37) 10px 0 / 1px 100% no-repeat; }
.dock button { position: relative; display: flex; flex-direction: column; align-items: center; justify-content: space-between; padding: 7px 0 2px; }
.dock svg svg { display: inline; }
.dock button > svg { width: 44px; height: 44px; }
.run::after { content: ""; width: 4px; height: 4px; border-radius: 50%; background: #180c08; }
.badge { position: absolute; right: 0; top: 6px; padding: 0 3px; border-radius: 9px; background: #f01515; color: #fff; font-size: 9px; line-height: 16px; font-weight: 500; }
.cmon { font: 6px Roboto, sans-serif; fill: #fff; text-anchor: middle; }
.cday { font: 300 20px Roboto, sans-serif; fill: #222; text-anchor: middle; }
.dict { font: 15px "Liberation Serif", serif; fill: #fff; text-anchor: middle; }
.dword { font: 5px "Liberation Serif", serif; fill: #f0c8c8; text-anchor: middle; }
.calc { font: 6px Roboto, sans-serif; fill: #8d9a98; text-anchor: end; }
.rlogo { font: bold 26px "Liberation Serif", serif; fill: #fff; text-anchor: middle; }
.term { font: bold 9px "Liberation Mono", monospace; fill: #fff; }
.peek { position: absolute; right: 0; bottom: 0; width: 8px; height: 87px; background: #ededed; border-left: 1px solid #c2c2c2; border-top: 1px solid #bbb; border-radius: 5px 0 0 0; }
```
